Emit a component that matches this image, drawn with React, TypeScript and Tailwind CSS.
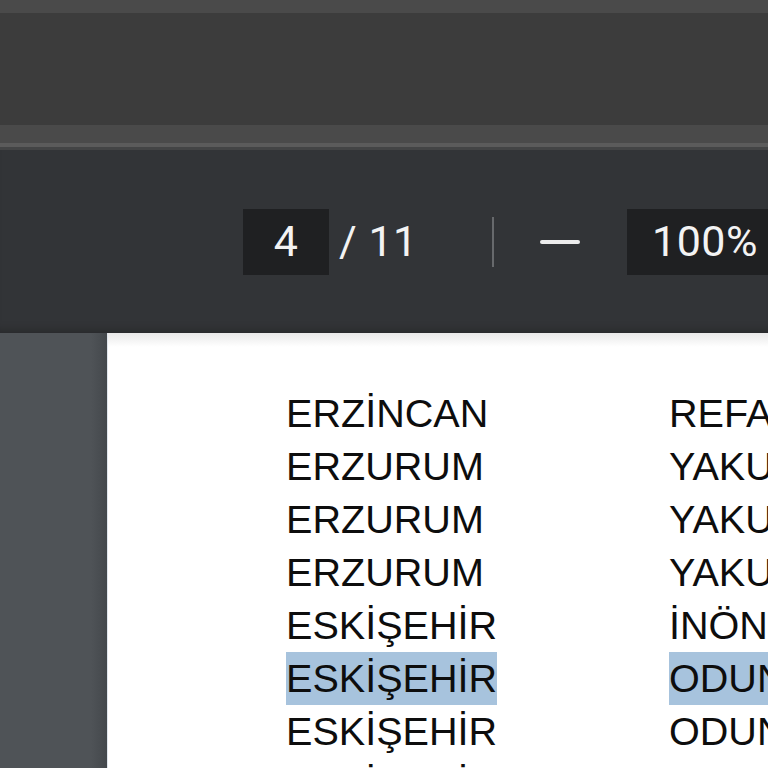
const left = ["ERZİNCAN", "ERZURUM", "ERZURUM", "ERZURUM", "ESKİŞEHİR", "ESKİŞEHİR", "ESKİŞEHİR", "ESKİŞEHİR"];
const right = ["REFAHİYE", "YAKUTİYE", "YAKUTİYE", "YAKUTİYE", "İNÖNÜ", "ODUNPAZARI", "ODUNPAZARI", "ODUNPAZARI"];
const selected = 5;

function Toolbar() {
  return (
    <div className="flex h-[183px] items-center bg-[#323437] pl-[243px] font-['Roboto',sans-serif] text-[43px] tracking-[0.5px] text-[#f3f3f3] shadow-[inset_0_-10px_10px_-8px_rgba(0,0,0,0.25)]">
      <div className="flex h-[66px] w-[86px] items-center justify-center bg-[#1f2022] leading-none">4</div>
      <span className="w-[163px] pl-[10px] leading-none">/ 11</span>
      <div className="h-[50px] w-[2px] bg-[#67696c]" />
      <div className="ml-[46px] h-[4px] w-[40px] rounded-sm bg-[#ececec]" />
      <div className="ml-[47px] flex h-[66px] flex-1 items-center bg-[#1f2022] pl-[25px] leading-none">100%</div>
    </div>
  );
}

export default function App() {
  return (
    <div className="flex h-[768px] w-[768px] flex-col overflow-hidden bg-[#4f5357]">
      <div className="h-[13px] bg-[#4a4a4a]" />
      <div className="h-[112px] bg-[#3c3c3c]" />
      <div className="h-[18px] bg-[#4a4a4a]" />
      <div className="h-[4px] bg-[#5b5b5b]" />
      <div className="h-[3px] bg-[#434445]" />
      <Toolbar />
      <div className="flex min-h-0 flex-1">
        <div className="w-[107px] shrink-0 bg-[linear-gradient(to_right,#4f5357_85%,#44484c)]" />
        <div className="flex min-w-0 flex-1 border-l border-[#dfe5ec] bg-[linear-gradient(to_bottom,#e9e9e9,#ffffff_14px)] pl-[178px] pt-[54px] font-['Liberation_Sans',Arial,sans-serif] text-[39.6px] leading-[53px] text-[#0d0d0d]">
          <div className="flex w-[383px] shrink-0 flex-col">
            {left.map((t, i) => (
              <div key={i} className="flex">
                <span className={i === selected ? "bg-[#a7c3dd]" : ""}>{t}</span>
              </div>
            ))}
          </div>
          <div className="flex shrink-0 flex-col whitespace-nowrap">
            {right.map((t, i) => (
              <div key={i} className="flex">
                <span className={i === selected ? "bg-[#a7c3dd]" : ""}>{t}</span>
              </div>
            ))}
          </div>
        </div>
      </div>
    </div>
  );
}
